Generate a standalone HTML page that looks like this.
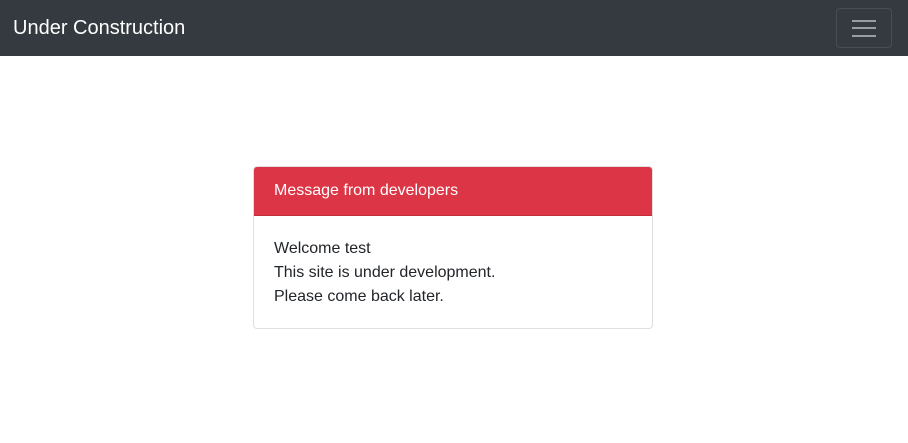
<!DOCTYPE html>
<html><head><style>
*{box-sizing:border-box}
body{margin:0;font-family:"Liberation Sans",sans-serif;background:#fff;width:908px;height:443px;overflow:hidden;color:#212529}
.nav{height:56px;background:#343a40;position:relative}
.brand{position:absolute;left:13px;top:15px;font-size:20px;color:#fff;line-height:26px}
.tog{position:absolute;left:836px;top:8px;width:56px;height:40px;border:1px solid rgba(255,255,255,.1);border-radius:4px}
.tog i{position:absolute;left:15px;width:24px;height:2px;background:rgba(255,255,255,.5)}
.card{position:absolute;left:253px;top:166px;width:400px;height:163px;border:1px solid rgba(0,0,0,.125);border-radius:4px;overflow:hidden}
.hd{background:#dc3545;color:#fff;height:49px;padding:14px 20px;font-size:16px;line-height:20px;border-bottom:1px solid rgba(0,0,0,.125)}
.bd{padding:21px 20px;font-size:16px;line-height:24px}
</style></head><body>
<div class="nav"><div class="brand">Under Construction</div>
<div class="tog"><i style="top:11px"></i><i style="top:18px"></i><i style="top:26px"></i></div></div>
<div class="card"><div class="hd">Message from developers</div>
<div class="bd">Welcome test<br>This site is under development.<br>Please come back later.</div></div>
</body></html>
